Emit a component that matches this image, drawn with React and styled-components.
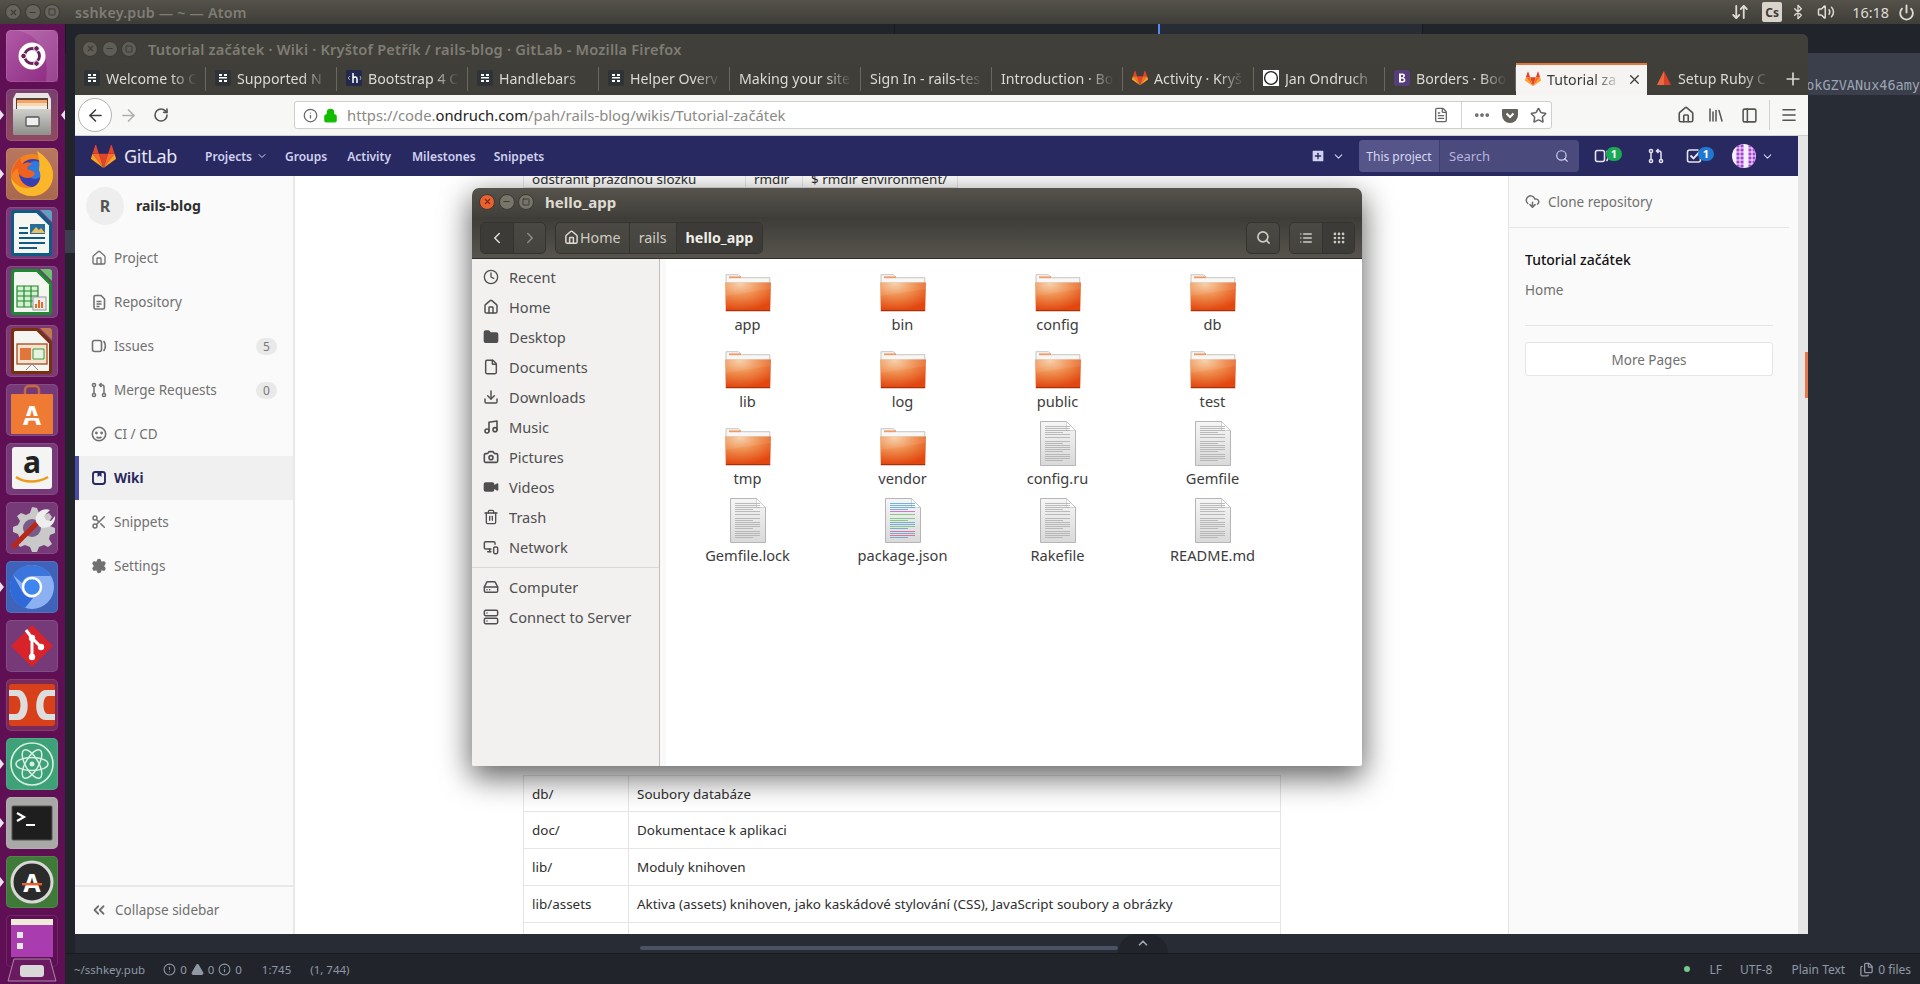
import React from "react";
import styled, { createGlobalStyle } from "styled-components";
import {
  ArrowLeft, ArrowRight, RotateCw, Info, Lock, Star, X, Plus, Menu, Search, ChevronDown, ChevronLeft,
  ChevronRight, ChevronUp, ChevronsLeft, Scissors, Settings, Clock, House, FileText,
  Folder, File, Download, Music, Camera, Video, Trash2, MonitorSmartphone, HardDrive, Server, List, Grip,
  Bluetooth, Volume2, Power, ArrowDownUp, CloudDownload, Ellipsis, CircleAlert, TriangleAlert, Minus,
  Square, PanelLeft, Library, SquarePlus, Files,
} from "lucide-react";

const UI = `"Noto Sans", "Open Sans", sans-serif`;

const GlobalStyle = createGlobalStyle`
  html, body { margin: 0; padding: 0; height: 100%; overflow: hidden; background: #282c34; }
  #root { height: 100%; }
  * { box-sizing: border-box; }
`;

const Desktop = styled.div`
  position: relative;
  width: 1920px;
  height: 984px;
  overflow: hidden;
  display: flex;
  flex-direction: column;
  font-family: ${UI};
`;

/* ---------- top panel ---------- */
const TopPanel = styled.div`
  height: 24px;
  flex: none;
  display: flex;
  align-items: center;
  padding: 0 0 0 5px;
  background: linear-gradient(#545249, #3e3d38);
  color: #7f7d74;
  font-size: 14.3px;
  font-weight: 600;
`;
const DimButtons = styled.div`
  display: flex;
  gap: 3.5px;
  margin-right: ${(p) => p.$mr}px;
`;
const DimButton = styled.span`
  width: 16px;
  height: 16px;
  border-radius: 50%;
  background: ${(p) => p.$bg || "#66645c"};
  border: 1px solid #3a3934;
  display: flex;
  align-items: center;
  justify-content: center;
  color: ${(p) => p.$fg || "#3c3b36"};
`;
const PanelTitle = styled.span`
  letter-spacing: 0.2px;
`;
const Tray = styled.div`
  margin-left: auto;
  display: flex;
  align-items: center;
  color: #dfdbd2;
  font-size: 14.4px;
  font-weight: 400;
  padding-right: 5px;
`;
const TrayItem = styled.span`
  display: inline-flex;
  margin-left: ${(p) => p.$ml}px;
`;
const CsBox = styled.span`
  width: 20px;
  height: 20px;
  margin-left: 13px;
  background: #d8d4cb;
  color: #3c3b37;
  border-radius: 2px;
  font-size: 12px;
  font-weight: 700;
  display: flex;
  align-items: center;
  justify-content: center;
`;

/* ---------- launcher ---------- */
const Body = styled.div`
  flex: 1;
  display: flex;
  min-height: 0;
`;
const Launcher = styled.div`
  width: 65px;
  flex: none;
  background: #5f1054;
  padding: 6px 0 0 6px;
  display: flex;
  flex-direction: column;
  gap: 7px;
  position: relative;
`;
const Tile = styled.div`
  position: relative;
  width: 52px;
  height: 52px;
  border-radius: 5px;
  background: ${(p) => p.$bg};
  box-shadow: inset 0 0 0 1px rgba(255, 255, 255, 0.1);
  flex: none;
  svg { display: block; }
`;
const Pip = styled.span`
  position: absolute;
  top: 21px;
  ${(p) => (p.$right ? "right: -7px;" : "left: -6px;")}
  width: 0;
  height: 0;
  border-top: 5px solid transparent;
  border-bottom: 5px solid transparent;
  ${(p) => (p.$right ? "border-right: 4px solid #e8e4ea;" : "border-left: 4px solid #e8e4ea;")}
`;

/* ---------- atom behind ---------- */
const AtomPane = styled.div`
  flex: 1;
  min-width: 0;
  display: flex;
  flex-direction: column;
  background: #282c34;
`;
const AtomTabs = styled.div`
  height: 29px;
  flex: none;
  display: flex;
  background: #21252b;
`;
const AtomTab = styled.div`
  width: ${(p) => p.$w}px;
  background: ${(p) => (p.$active ? "#282c34" : "#21252b")};
  border-left: ${(p) => (p.$active ? "2px solid #568af2" : "1px solid #181a1f")};
`;
const EditorRow = styled.div`
  flex: 1;
  display: flex;
  min-height: 0;
`;
const TreeStrip = styled.div`
  width: 10px;
  flex: none;
  background: #21252b;
  padding-top: 177px;
`;
const TreeSelected = styled.div`
  height: 23px;
  background: #3a3f4b;
`;
const Editor = styled.div`
  flex: 1;
  min-width: 0;
  display: flex;
  flex-direction: column;
`;
const SelectedLine = styled.div`
  height: 42px;
  background: #3a3f4b;
  color: #9da5b4;
  font: 13.5px "DejaVu Sans Mono", monospace;
  display: flex;
  justify-content: flex-end;
  align-items: flex-end;
  padding-bottom: 2px;
  white-space: nowrap;
  overflow: hidden;
`;
const EditorFoot = styled.div`
  margin-top: auto;
  height: 19px;
  display: flex;
  align-items: flex-end;
  padding-left: 565px;
`;
const HScroll = styled.div`
  width: 478px;
  height: 4px;
  border-radius: 2px;
  background: #4b5362;
  margin-bottom: 3px;
`;
const Handle = styled.div`
  width: 50px;
  height: 19px;
  border-radius: 25px 25px 0 0;
  background: #21252b;
  color: #9da5b4;
  display: flex;
  justify-content: center;
  padding-top: 2px;
`;
const StatusBar = styled.div`
  height: 31px;
  flex: none;
  background: #21252b;
  border-top: 1px solid #181a1f;
  color: #9098a6;
  font-size: 12px;
  display: flex;
  align-items: center;
  padding: 0 9px;
`;
const StatusGroup = styled.span`
  display: inline-flex;
  align-items: center;
  font-size: ${(p) => p.$fs || 12}px;
  gap: ${(p) => p.$gap ?? 4}px;
  margin-left: ${(p) => p.$ml ?? 0}px;
`;
const StatusPush = styled.span`
  flex: 1;
`;
const GreenDot = styled.span`
  width: 6px;
  height: 6px;
  border-radius: 50%;
  background: #73c990;
`;

/* ---------- firefox ---------- */
const FirefoxWindow = styled.div`
  position: absolute;
  left: 75px;
  top: 34px;
  width: 1733px;
  height: 900px;
  display: flex;
  flex-direction: column;
  border-radius: 6px 6px 0 0;
  overflow: hidden;
  background: #3f3e39;
`;
const FfTitle = styled.div`
  height: 29px;
  flex: none;
  display: flex;
  align-items: center;
  padding: 0 0 0 7px;
  color: #7f7d74;
  font-size: 14.6px;
  font-weight: 600;
  background: #403f3a;
`;
const TabStrip = styled.div`
  height: 32px;
  flex: none;
  display: flex;
  background: #3f3e39;
`;
const Tab = styled.div`
  width: 131px;
  flex: none;
  display: flex;
  align-items: center;
  gap: 6px;
  padding: 0 ${(p) => (p.$active ? 5 : 9)}px 2px 9px;
  font-size: 14.2px;
  color: ${(p) => (p.$active ? "#3a3a38" : "#dcdad4")};
  background: ${(p) => (p.$active ? "#f5f4f2" : "transparent")};
  border-top: ${(p) => (p.$active ? "2px solid #e8743b" : "none")};
  position: relative;
  &::after {
    content: "";
    display: ${(p) => (p.$active || p.$noSep ? "none" : "block")};
    position: absolute;
    right: 0;
    top: 4px;
    bottom: 4px;
    width: 1px;
    background: #6a6860;
  }
`;
const TabText = styled.span`
  flex: 1;
  min-width: 0;
  white-space: nowrap;
  overflow: hidden;
  -webkit-mask-image: linear-gradient(to right, #000 calc(100% - 26px), transparent);
  mask-image: linear-gradient(to right, #000 calc(100% - 26px), transparent);
`;
const NewTab = styled.div`
  width: 33px;
  display: flex;
  align-items: center;
  justify-content: center;
  color: #d8d6d0;
`;
const NavBar = styled.div`
  height: 41px;
  flex: none;
  display: flex;
  align-items: center;
  background: #f7f7f6;
  border-bottom: 1px solid #d0cfcc;
  color: #55544f;
  padding-left: 3px;
`;
const BackButton = styled.div`
  width: 34px;
  height: 34px;
  border-radius: 50%;
  background: #fff;
  border: 1px solid #b4b3af;
  display: flex;
  align-items: center;
  justify-content: center;
  color: #3f3f3c;
  flex: none;
`;
const NavIcon = styled.span`
  display: inline-flex;
  width: ${(p) => p.$w || 32}px;
  justify-content: ${(p) => (p.$end ? "flex-end" : "center")};
  align-items: center;
  color: ${(p) => p.$color || "inherit"};
  flex: none;
`;
const UrlBar = styled.div`
  width: 1258px;
  height: 28px;
  margin-left: 0;
  flex: none;
  background: #fff;
  border: 1px solid #cfcecb;
  border-radius: 3px;
  display: flex;
  align-items: center;
  padding-left: 8px;
  font-size: 14.8px;
  color: #8b8a86;
`;
const UrlHost = styled.span`
  color: #222;
`;
const UrlText = styled.span`
  margin-left: 5px;
  flex: 1;
`;
const VSep = styled.span`
  width: 1px;
  height: ${(p) => p.$h || 22}px;
  background: #d2d1ce;
  flex: none;
  margin: 0 ${(p) => p.$mr ?? 0}px 0 ${(p) => p.$ml ?? 0}px;
`;
const Page = styled.div`
  flex: 1;
  display: flex;
  min-height: 0;
  background: #fff;
`;
const PageMain = styled.div`
  flex: 1;
  min-width: 0;
  display: flex;
  flex-direction: column;
`;
const PageScroll = styled.div`
  width: 10px;
  flex: none;
  background: #e6e6e6;
  padding: 216px 0 0 7px;
`;
const PageThumb = styled.div`
  height: 46px;
  width: 3px;
  background: #e8774c;
`;
const GlHeader = styled.div`
  height: 40px;
  flex: none;
  background: #292961;
  display: flex;
  align-items: center;
  padding-left: 16px;
  color: #d1d1f0;
  position: relative;
  z-index: 1;
`;
const GlBrand = styled.span`
  font-size: 18px;
  color: #e6e6f5;
  margin-left: 8px;
  margin-right: 28px;
  letter-spacing: -0.3px;
`;
const GlLink = styled.span`
  font-size: 12px;
  font-weight: 600;
  margin-right: ${(p) => p.$mr ?? 20}px;
  display: inline-flex;
  align-items: center;
  gap: 4px;
`;
const GlRight = styled.div`
  margin-left: auto;
  display: flex;
  align-items: center;
  padding-right: 24px;
`;
const SearchBox = styled.div`
  width: 220px;
  height: 32px;
  margin: 0 15px 0 14px;
  border-radius: 4px;
  background: #4b4a7c;
  display: flex;
  align-items: center;
  font-size: 13px;
  overflow: hidden;
`;
const SearchScope = styled.span`
  width: 81px;
  height: 100%;
  background: #56558a;
  color: #d8d8f0;
  font-size: 12px;
  display: flex;
  align-items: center;
  justify-content: center;
  border-right: 1px solid #3f3e72;
`;
const SearchHint = styled.span`
  margin-left: 9px;
  flex: 1;
  color: #b5b5dc;
`;
const HeaderIcon = styled.span`
  position: relative;
  display: inline-flex;
  width: ${(p) => p.$w || 38}px;
  align-items: center;
  color: #e4e4f4;
`;
const HeaderBadge = styled.span`
  position: absolute;
  left: 12px;
  top: -1px;
  width: 16px;
  height: 14px;
  border-radius: 7px;
  background: ${(p) => p.$bg};
  color: #fff;
  font-size: 11px;
  font-weight: 700;
  line-height: 14px;
  text-align: center;
`;
const Avatar = styled.span`
  width: 24px;
  height: 24px;
  border-radius: 50%;
  flex: none;
  overflow: hidden;
  margin-right: 5px;
`;
const GlBody = styled.div`
  flex: 1;
  min-height: 0;
  display: flex;
`;
const Sidebar = styled.div`
  width: 220px;
  flex: none;
  background: #fafafa;
  border-right: 2px solid #e8e8e8;
  display: flex;
  flex-direction: column;
`;
const ProjectHead = styled.div`
  height: 60px;
  display: flex;
  align-items: center;
  padding: 0 0 1px 11px;
  font-size: 14px;
  font-weight: 700;
  color: #2e2e2e;
`;
const ProjectAvatar = styled.span`
  width: 38px;
  height: 38px;
  border-radius: 50%;
  background: #eee;
  color: #555;
  font-size: 16px;
  font-weight: 700;
  display: flex;
  align-items: center;
  justify-content: center;
  margin-right: 12px;
`;
const SideItem = styled.div`
  height: 44px;
  display: flex;
  align-items: center;
  padding: 0 16px 0 ${(p) => (p.$active ? 12 : 16)}px;
  gap: 7px;
  font-size: 13.5px;
  font-weight: ${(p) => (p.$active ? 700 : 400)};
  color: ${(p) => (p.$active ? "#292961" : "#707070")};
  background: ${(p) => (p.$active ? "#f0f0f0" : "transparent")};
  border-left: ${(p) => (p.$active ? "4px solid #4b4ba3" : "none")};
`;
const Count = styled.span`
  margin-left: auto;
  width: 21px;
  height: 17px;
  border-radius: 9px;
  background: #e9e9e9;
  color: #777;
  font-size: 12px;
  line-height: 17px;
  text-align: center;
`;
const Collapse = styled.div`
  margin-top: auto;
  height: 49px;
  border-top: 2px solid #e8e8e8;
  display: flex;
  align-items: center;
  padding: 0 0 1px 15px;
  gap: 7px;
  font-size: 13.5px;
  color: #707070;
`;
const WikiMain = styled.div`
  flex: 1;
  min-width: 0;
  overflow: hidden;
  padding-left: 228px;
`;
const WikiTable = styled.div`
  display: grid;
  grid-template-columns: ${(p) => p.$cols};
  width: ${(p) => p.$w}px;
  margin-top: ${(p) => p.$mt}px;
  border-left: 1px solid #e5e5e5;
  font-size: 13.45px;
  color: #2e2e2e;
`;
const Cell = styled.div`
  height: 37px;
  padding: 0 8px;
  line-height: ${(p) => p.$lh || 37}px;
  border-right: 1px solid #e5e5e5;
  border-bottom: 1px solid #e5e5e5;
  white-space: nowrap;
  overflow: hidden;
  border-top: ${(p) => (p.$first ? "1px solid #e5e5e5" : "none")};
`;
const RightBar = styled.div`
  width: 290px;
  flex: none;
  background: #fafafa;
  border-left: 1px solid #e5e5e5;
  color: #707070;
  font-size: 13.5px;
`;
const CloneRow = styled.div`
  height: 52px;
  margin-right: 9px;
  padding: 0 0 0 16px;
  display: flex;
  align-items: center;
  gap: 8px;
  border-bottom: 1px solid #e5e5e5;
`;
const RightInner = styled.div`
  padding: 0 25px 0 16px;
`;
const WikiTitle = styled.div`
  color: #111;
  font-weight: 500;
  font-size: 14px;
  margin-top: 22px;
  line-height: 20px;
`;
const WikiHome = styled.div`
  margin-top: 10px;
  line-height: 20px;
  padding-bottom: 25px;
  border-bottom: 1px solid #e5e5e5;
`;
const MorePages = styled.div`
  margin-top: 16px;
  height: 34px;
  padding-top: 1px;
  border: 1px solid #e5e5e5;
  border-radius: 3px;
  background: #fff;
  display: flex;
  align-items: center;
  justify-content: center;
`;

/* ---------- nautilus ---------- */
const FilesWindow = styled.div`
  position: absolute;
  left: 472px;
  top: 188px;
  width: 890px;
  height: 578px;
  display: flex;
  flex-direction: column;
  border-radius: 7px 7px 2px 2px;
  overflow: hidden;
`;
const FilesShadow = styled.div`
  position: absolute;
  left: 472px;
  top: 188px;
  width: 890px;
  height: 578px;
  border-radius: 7px;
  box-shadow: 0 10px 30px 2px rgba(0, 0, 0, 0.6);
`;
const FilesTitle = styled.div`
  height: 29px;
  flex: none;
  display: flex;
  align-items: center;
  padding: 0 0 2px 7px;
  background: linear-gradient(#55534b, #403f3a);
  color: #dfdbd2;
  font-size: 15px;
  font-weight: 700;
`;
const FilesTools = styled.div`
  height: 42px;
  flex: none;
  display: flex;
  align-items: center;
  padding: 0 7px 0 8px;
  background: linear-gradient(#3d3c37, #56544c);
  border-bottom: 1px solid #2f2e2a;
`;
const ToolGroup = styled.div`
  display: flex;
  height: 32px;
  border: 1px solid #34332f;
  border-radius: 5px;
  margin-right: ${(p) => p.$mr ?? 0}px;
  overflow: hidden;
  color: #dfdbd2;
  font-size: 14.3px;
  background: linear-gradient(#4a4943, #44433e);
`;
const ToolSpacer = styled.span`
  flex: 1;
`;
const ToolButton = styled.div`
  min-width: ${(p) => p.$w || 32}px;
  display: flex;
  align-items: center;
  justify-content: center;
  gap: 1px;
  padding: 0 ${(p) => p.$pad ?? 0}px;
  border-left: ${(p) => (p.$first ? "none" : "1px solid #34332f")};
  background: ${(p) => (p.$on ? "#3c3b37" : "transparent")};
  font-weight: ${(p) => (p.$bold ? 700 : 400)};
  color: ${(p) => (p.$bold ? "#f0eee8" : "#d0ccc3")};
`;
const FilesBody = styled.div`
  flex: 1;
  min-height: 0;
  display: flex;
  background: #fff;
`;
const Places = styled.div`
  width: 188px;
  flex: none;
  background: #f2f1f0;
  border-right: 1px solid #c0beba;
  padding-top: 3px;
  color: #4c4c4c;
  font-size: 14.6px;
`;
const Place = styled.div`
  height: 30px;
  display: flex;
  align-items: center;
  padding-left: 11px;
  gap: 10px;
  color: #4f4f4f;
`;
const PlaceSep = styled.div`
  height: 1px;
  background: #d9d8d6;
  margin: 5px 0 4px;
`;
const IconGrid = styled.div`
  flex: 1;
  display: grid;
  grid-template-columns: repeat(4, 155px);
  grid-auto-rows: 77px;
  padding: 5px 0 0 4px;
  border-left: 6px solid #f9f9f9;
  align-content: start;
`;
const FileItem = styled.div`
  display: flex;
  flex-direction: column;
  align-items: center;
  color: #3c3c3c;
  font-size: 14.6px;
`;
const FileIconBox = styled.div`
  height: 48px;
  display: flex;
  align-items: flex-end;
`;
const FileLabel = styled.span`
  line-height: 20px;
  margin-top: 2px;
`;

/* ---------- drawings ---------- */
const GitLabLogo = ({ size = 24 }) => (
  <svg width={size} height={size} viewBox="0 0 36 36">
    <path fill="#e24329" d="M18 34.5L24.6 14.2H11.4z" />
    <path fill="#fc6d26" d="M18 34.5L11.4 14.2H2.1z" />
    <path fill="#fca326" d="M2.1 14.2L.1 20.4c-.2.6 0 1.2.5 1.5L18 34.5z" />
    <path fill="#e24329" d="M2.1 14.2h9.3L7.4 1.9c-.2-.6-1.1-.6-1.3 0z" />
    <path fill="#fc6d26" d="M18 34.5l6.6-20.3h9.3z" />
    <path fill="#fca326" d="M33.9 14.2l2 6.2c.2.6 0 1.2-.5 1.5L18 34.5z" />
    <path fill="#e24329" d="M33.9 14.2h-9.3l4-12.3c.2-.6 1.1-.6 1.3 0z" />
  </svg>
);

const BookFavicon = () => (
  <svg width="16" height="16" viewBox="0 0 16 16">
    <rect width="16" height="16" rx="2" fill="#2e3338" />
    <path d="M4 4h3v2H4zM9 4h3v2H9zM4 7h8v1.6H4zM4 10h3v2H4zM9 10h3v2H9z" fill="#fff" />
  </svg>
);
const HFavicon = () => (
  <svg width="16" height="16" viewBox="0 0 16 16">
    <rect width="16" height="16" rx="2" fill="#23284f" />
    <path d="M7 3v10M7 8c2-2 4-1 4 1v4" stroke="#fff" strokeWidth="1.5" fill="none" />
    <path d="M4 6L2 8l2 2M14 6l1 2-1 2" stroke="#9aa" strokeWidth="1" fill="none" />
  </svg>
);
const GithubFavicon = () => (
  <svg width="16" height="16" viewBox="0 0 16 16">
    <rect width="16" height="16" fill="#fff" />
    <circle cx="8" cy="8" r="6.4" fill="#fff" stroke="#222" strokeWidth="1.4" />
  </svg>
);
const BFavicon = () => (
  <svg width="16" height="16" viewBox="0 0 16 16">
    <rect width="16" height="16" rx="3" fill="#563d7c" />
    <path d="M5 3.5h3.6c3 0 3 3.6.9 4.2 2.6.4 2.6 4.8-.7 4.8H5zM7 5v2.2h1.4c1.3 0 1.3-2.2 0-2.2zM7 8.7V11h1.7c1.4 0 1.4-2.3 0-2.3z" fill="#fff" fillRule="evenodd" />
  </svg>
);
const RubyFavicon = () => (
  <svg width="16" height="16" viewBox="0 0 16 16">
    <path d="M8 1l7 14H1z" fill="#d9402a" />
    <path d="M8 1v14H1z" fill="#e9683f" />
  </svg>
);
const Pocket = () => (
  <svg width="18" height="18" viewBox="0 0 18 18">
    <path d="M2 3h14a1 1 0 0 1 1 1v5a8 8 0 0 1-16 0V4a1 1 0 0 1 1-1z" fill="#62615c" />
    <path d="M5.5 7.5L9 11l3.5-3.5" stroke="#fff" strokeWidth="2" fill="none" />
  </svg>
);

/* gitlab's own nav glyphs */
const IssueIcon = ({ size = 16 }) => (
  <svg width={size} height={size} viewBox="0 0 16 16" fill="none" stroke="currentColor" strokeWidth="1.6">
    <rect x="1.5" y="2.5" width="9" height="11" rx="2" />
    <path d="M13 3.5c1.6 2.6 1.6 6.4 0 9" strokeLinecap="round" />
  </svg>
);
const MergeIcon = ({ size = 16 }) => (
  <svg width={size} height={size} viewBox="0 0 16 16" fill="none" stroke="currentColor" strokeWidth="1.5">
    <circle cx="3" cy="3" r="1.6" />
    <circle cx="3" cy="13" r="1.6" />
    <circle cx="13" cy="13" r="1.6" />
    <path d="M3 4.6v6.8M13 11.4V5a2 2 0 0 0-2-2H8.5M10.5 1L8.5 3l2 2" />
  </svg>
);
const TodoIcon = ({ size = 16 }) => (
  <svg width={size} height={size} viewBox="0 0 16 16" fill="none" stroke="currentColor" strokeWidth="1.6">
    <path d="M14.5 8v4a2 2 0 0 1-2 2h-9a2 2 0 0 1-2-2V4a2 2 0 0 1 2-2h9" />
    <path d="M4.5 7.5l3 3 7-7.5" strokeWidth="1.9" />
  </svg>
);
const CiIcon = ({ size = 16 }) => (
  <svg width={size} height={size} viewBox="0 0 16 16" fill="none" stroke="currentColor" strokeWidth="1.6">
    <circle cx="8" cy="8" r="6.7" />
    <circle cx="5.4" cy="7" r="1.4" fill="currentColor" stroke="none" />
    <circle cx="10.6" cy="7" r="1.4" fill="currentColor" stroke="none" />
    <path d="M5.5 11c1.5 1 3.5 1 5 0" />
  </svg>
);
const WikiIcon = ({ size = 16 }) => (
  <svg width={size} height={size} viewBox="0 0 16 16" fill="none" stroke="currentColor" strokeWidth="1.9">
    <rect x="2" y="2" width="12" height="12" rx="2.4" />
    <path d="M6.5 2h4v5l-2-1.4-2 1.4z" fill="currentColor" stroke="none" />
  </svg>
);
const RepoIcon = ({ size = 16 }) => (
  <svg width={size} height={size} viewBox="0 0 16 16" fill="none" stroke="currentColor" strokeWidth="1.6">
    <path d="M3 3a1.5 1.5 0 0 1 1.5-1.5H10L13.5 5v8.5A1.5 1.5 0 0 1 12 15H4.5A1.5 1.5 0 0 1 3 13.5z" />
    <path d="M5.5 7.5h5M5.5 10h5M5.5 12.5h3" />
  </svg>
);

const IdentIcon = () => (
  <svg width="24" height="24" viewBox="0 0 24 24">
    <rect width="24" height="24" fill="#f4f0fa" />
    {[...Array(36)].map((_, i) => {
      const x = (i % 6) * 4;
      const y = Math.floor(i / 6) * 4;
      return (i * 7) % 3 !== 0 ? <rect key={i} x={x + 0.5} y={y + 0.5} width="3" height="3" fill="#a63fd8" /> : null;
    })}
  </svg>
);

const FolderIcon = () => (
  <svg width="46" height="38" viewBox="0 0 46 38">
    <defs>
      <radialGradient id="fg" cx="0.32" cy="0.05" r="0.95">
        <stop offset="0" stopColor="#f6cda4" />
        <stop offset="0.45" stopColor="#ef8f50" />
        <stop offset="1" stopColor="#e2470f" />
      </radialGradient>
    </defs>
    <path d="M1 .7h12.5l3 3h28.3V9H1z" fill="#f8f7f5" stroke="#b9b7b2" strokeWidth="0.8" />
    <rect x="4" y="2.4" width="12" height="1.8" fill="#ef9a68" />
    <path d="M0 8.5h46l-.8 28H.8z" fill="url(#fg)" />
    <path d="M46 15L0 22v-13.5h46z" fill="#fff" opacity="0.08" />
    <path d="M.8 36h44.4v1.3H.8z" fill="#a6320c" />
  </svg>
);

const LINE_ROWS = [4, 6, 8, 10, 12, 15, 19, 21, 23, 25, 27, 29, 32, 34, 36, 38];
const LINE_COLORS = ["#5aa0d8", "#5aa0d8", "#5aa0d8", "#5aa0d8", "#c060c0", "#70c070", "#70c070", "#70c070", "#5aa0d8", "#5aa0d8", "#70c070", "#5aa0d8", "#d85a8a", "#5aa0d8", "#d85a8a", "#5aa0d8"];
const DocIcon = ({ code }) => (
  <svg width="36" height="45" viewBox="0 0 36 45">
    <defs>
      <linearGradient id="dg" x1="0" y1="0" x2="0" y2="1">
        <stop offset="0" stopColor="#f6f6f6" />
        <stop offset="1" stopColor="#d9d9d9" />
      </linearGradient>
    </defs>
    <path d="M.5.5h26l9 9v35H.5z" fill="url(#dg)" stroke="#b5b5b5" />
    <path d="M26.5.5v9h9z" fill="#fff" stroke="#bbb" strokeWidth="0.6" />
    {LINE_ROWS.map((y, i) => (
      <rect key={y} x="5" y={y + 1} width={i % 4 === 3 ? 18 : 25} height="0.8" fill={code ? LINE_COLORS[i] : "#adadad"} />
    ))}
  </svg>
);

const OfficeDoc = ({ edge, corner, children }) => (
  <svg width="52" height="52" viewBox="0 0 52 52">
    <path d="M8 3h24l14 14v29a3 3 0 0 1-3 3H8a3 3 0 0 1-3-3V6a3 3 0 0 1 3-3z" fill={edge} />
    <path d="M9 6h21.5L43 18.5V46H8V7z" fill="#f5f5f2" />
    <path d="M34 3h9a3 3 0 0 1 3 3v9z" fill={corner} />
    {children}
  </svg>
);

const TileIcon = ({ kind }) => {
  switch (kind) {
    case "ubuntu":
      return (
        <svg width="52" height="52" viewBox="0 0 52 52">
          <path d="M10 0c22 4 34 22 30 52h12V8a8 8 0 0 0-8-8z" fill="#fff" opacity="0.12" />
          <circle cx="26" cy="26" r="13.5" fill="#fff" />
          <circle cx="26" cy="26" r="7.5" fill="none" stroke="#6b1f5c" strokeWidth="2.8" />
          <circle cx="17.5" cy="26" r="2.8" fill="#6b1f5c" stroke="#fff" />
          <circle cx="30.5" cy="18.5" r="2.8" fill="#6b1f5c" stroke="#fff" />
          <circle cx="30.5" cy="33.5" r="2.8" fill="#6b1f5c" stroke="#fff" />
        </svg>
      );
    case "files":
      return (
        <svg width="52" height="52" viewBox="0 0 52 52">
          <defs>
            <linearGradient id="drawer" x1="0" y1="0" x2="0" y2="1">
              <stop offset="0" stopColor="#cfcfcc" />
              <stop offset="1" stopColor="#8f8f8c" />
            </linearGradient>
          </defs>
          <path d="M10 4h32l3 6v14H7V10z" fill="#e6e6e4" />
          <rect x="10" y="9" width="32" height="13" fill="#5a4030" />
          <rect x="11" y="11" width="30" height="3" fill="#f2a468" />
          <rect x="11" y="14" width="30" height="3" fill="#f5d8b8" />
          <rect x="11" y="17" width="30" height="4" fill="#f3efe6" />
          <rect x="7" y="20" width="38" height="26" rx="1" fill="url(#drawer)" />
          <rect x="20" y="28" width="13" height="9" rx="1" fill="#efefef" stroke="#555" strokeWidth="1.3" />
        </svg>
      );
    case "firefox":
      return (
        <svg width="52" height="52" viewBox="0 0 52 52">
          <circle cx="26" cy="27" r="21" fill="#f6821f" />
          <circle cx="27" cy="25" r="14" fill="#3a3fb0" />
          <circle cx="29" cy="22" r="9" fill="#2f79e0" />
          <path d="M31 3c8 5 16 13 16 24 0 12-9 21-21 21C14 48 6 40 5 30c5 9 15 12 22 9 7-3 9-11 6-17 1-6 0-13-2-19z" fill="#fbb62a" />
          <path d="M6 27c0-7 4-14 9-17-1 3 0 5 2 6 3-2 7-2 9 0-3 1-5 3-5 5 3 1 7 2 8 5-3 5-11 5-15 1-2-2-3-5-2-7-2 1-5 4-6 7z" fill="#f0601e" />
        </svg>
      );
    case "writer":
      return (
        <OfficeDoc edge="#0e5c86" corner="#5da0c4">
          <path d="M13 20h9v2h-9zM13 25h9v2h-9zM13 30h26v2H13zM13 35h26v2H13zM13 40h18v2H13z" fill="#0e5c86" />
          <rect x="24" y="17" width="15" height="10" fill="#2a6d96" />
          <path d="M25 26l5-6 3 3 2-2 4 5z" fill="#e8c060" />
        </OfficeDoc>
      );
    case "calc":
      return (
        <OfficeDoc edge="#1c8a2e" corner="#6cc46c">
          <path d="M11 20h21v21H11zM11 25h21M11 30h21M11 35h21M18 20v21M25 20v21" fill="#d6efd2" stroke="#1c8a2e" strokeWidth="1.2" />
          <rect x="27" y="31" width="13" height="13" fill="#eee" stroke="#999" />
          <path d="M29 42v-4h2v4zM32 42v-8h2v8zM35 42v-6h2v6z" fill="#e0702a" />
        </OfficeDoc>
      );
    case "impress":
      return (
        <OfficeDoc edge="#7a2f10" corner="#c07a50">
          <rect x="11" y="19" width="30" height="20" fill="#f5e3cf" stroke="#a24a1c" strokeWidth="1.3" />
          <path d="M14 23h11v12H14z" fill="#e0763c" />
          <path d="M27 24h11v10H27z" fill="#e7f2e2" stroke="#3b9a3b" />
          <path d="M20 45l6-6 6 6" stroke="#888" fill="none" />
        </OfficeDoc>
      );
    case "software":
      return (
        <svg width="52" height="52" viewBox="0 0 52 52">
          <path d="M19 11V6a4 4 0 0 1 4-4h6a4 4 0 0 1 4 4v5" fill="none" stroke="#c96a3a" strokeWidth="2.4" />
          <rect x="5" y="10" width="42" height="40" rx="1" fill="#ee7a33" />
          <text x="26" y="41" textAnchor="middle" fontSize="26" fontWeight="700" fontFamily="Noto Sans" fill="#fff">A</text>
          <rect x="14" y="32" width="24" height="2" fill="#ee7a33" />
        </svg>
      );
    case "amazon":
      return (
        <svg width="52" height="52" viewBox="0 0 52 52">
          <rect x="6" y="4" width="40" height="42" rx="3" fill="#f4f4f2" />
          <text x="26" y="30" textAnchor="middle" fontSize="30" fontWeight="700" fontFamily="Noto Sans" fill="#222">a</text>
          <path d="M10 34c8 6 22 6 32 0" stroke="#f09a1c" strokeWidth="2.4" fill="none" />
        </svg>
      );
    case "tools":
      return (
        <svg width="52" height="52" viewBox="0 0 52 52">
          <path d="M26 5l5 1 2 5 5 2 5-2 3 4-3 5 1 4 5 2v5l-5 2-1 4 3 5-4 3-4-2-5 2-2 5h-5l-2-5-5-2-5 2-3-4 3-4-2-5-5-2v-5l5-2 2-4-3-5 4-3 5 2 4-2z" fill="#c9c9c9" />
          <circle cx="26" cy="26" r="9" fill="#7a5a86" />
          <path d="M8 44L34 18" stroke="#b8261c" strokeWidth="5" strokeLinecap="round" />
          <path d="M30 20c-2-8 6-15 14-12l-6 6 2 4 5 1 4-5c1 9-8 14-15 11z" fill="#eee" />
        </svg>
      );
    case "chromium":
      return (
        <svg width="52" height="52" viewBox="0 0 52 52">
          <circle cx="26" cy="26" r="22" fill="#8cb1f2" />
          <path d="M26 4a22 22 0 0 1 19 11H26a11 11 0 0 0-10 7L7 14A22 22 0 0 1 26 4z" fill="#3c76dc" />
          <path d="M4 26a22 22 0 0 1 3-12l9 16a11 11 0 0 0 11 7l-8 10A22 22 0 0 1 4 26z" fill="#2f6ad8" />
          <circle cx="26" cy="26" r="9" fill="#3f86ee" stroke="#fff" strokeWidth="2.5" />
        </svg>
      );
    case "git":
      return (
        <svg width="52" height="52" viewBox="0 0 52 52">
          <path d="M26 5l21 21-21 21L5 26z" fill="#d8232a" />
          <path d="M20 10l6 8v20M26 18l9 9" stroke="#fff" strokeWidth="3" fill="none" />
          <circle cx="26" cy="18" r="3.2" fill="#fff" />
          <circle cx="35" cy="27" r="3.2" fill="#fff" />
          <circle cx="26" cy="37" r="3.2" fill="#fff" />
        </svg>
      );
    case "dc":
      return (
        <svg width="52" height="52" viewBox="0 0 52 52">
          <rect x="3" y="5" width="46" height="42" rx="3" fill="#d8401a" />
          <path d="M3 11h9c12 0 14 30 0 30H3v-6h7c6 0 6-18 0-18H3z" fill="#ddd" />
          <path d="M49 11h-9c-12 0-14 30 0 30h9v-6h-7c-6 0-6-18 0-18h7z" fill="#ddd" />
        </svg>
      );
    case "atom":
      return (
        <svg width="52" height="52" viewBox="0 0 52 52">
          <circle cx="26" cy="26" r="21" fill="#3ea178" stroke="#d8efe3" strokeWidth="1.6" />
          <g fill="none" stroke="#d8efe3" strokeWidth="1.5">
            <ellipse cx="26" cy="26" rx="16" ry="6.5" />
            <ellipse cx="26" cy="26" rx="16" ry="6.5" transform="rotate(60 26 26)" />
            <ellipse cx="26" cy="26" rx="16" ry="6.5" transform="rotate(120 26 26)" />
          </g>
          <circle cx="26" cy="26" r="2.5" fill="#d8efe3" />
        </svg>
      );
    case "terminal":
      return (
        <svg width="52" height="52" viewBox="0 0 52 52">
          <rect x="6" y="9" width="40" height="34" rx="1" fill="#1e1e1e" stroke="#555" />
          <path d="M11 16l7 4-7 4" stroke="#fff" strokeWidth="2.2" fill="none" />
          <rect x="20" y="27" width="9" height="2" fill="#fff" />
        </svg>
      );
    case "update":
      return (
        <svg width="52" height="52" viewBox="0 0 52 52">
          <circle cx="26" cy="26" r="20" fill="#2b2b2b" stroke="#d8d8d8" strokeWidth="3" />
          <text x="26" y="36" textAnchor="middle" fontSize="25" fontWeight="700" fontFamily="Noto Sans" fill="#fff">A</text>
          <rect x="16" y="27" width="20" height="2.4" fill="#e8602c" />
        </svg>
      );
    default:
      return (
        <svg width="52" height="69" viewBox="0 0 52 69">
          <rect x="5" y="4" width="42" height="38" fill="#a93db0" />
          <rect x="5" y="4" width="42" height="6" fill="#f0ead8" />
          <rect x="11" y="17" width="6" height="6" fill="#e8e8e8" />
          <rect x="11" y="28" width="6" height="6" fill="#e8e8e8" />
          <path d="M8 44h36l6 22H2z" fill="#6a1a60" stroke="#a88aa4" />
          <rect x="14" y="50" width="24" height="12" rx="3" fill="#d8d8d8" />
        </svg>
      );
  }
};

const LAUNCHER = [
  { kind: "ubuntu", bg: "linear-gradient(135deg,#b15aa6,#8b2a80)" },
  { kind: "files", bg: "linear-gradient(#7a3f6e,#8f4a5e)", left: true, right: true },
  { kind: "firefox", bg: "linear-gradient(#b87860,#a8684e)", left: true },
  { kind: "writer", bg: "#773a78" },
  { kind: "calc", bg: "#773a78" },
  { kind: "impress", bg: "#7d3a72" },
  { kind: "software", bg: "#773a78" },
  { kind: "amazon", bg: "#773a78" },
  { kind: "tools", bg: "#773a78" },
  { kind: "chromium", bg: "#3f63b8", left: true },
  { kind: "git", bg: "#773a78" },
  { kind: "dc", bg: "#7a2a5a" },
  { kind: "atom", bg: "#3ea178", left: true },
  { kind: "terminal", bg: "#a8a8a6", left: true },
  { kind: "update", bg: "#3f7a38", left: true },
  { kind: "workspace", bg: "#5f1054" },
];

const TABS = [
  { text: "Welcome to C", icon: <BookFavicon /> },
  { text: "Supported N", icon: <BookFavicon /> },
  { text: "Bootstrap 4 C", icon: <HFavicon /> },
  { text: "Handlebars", icon: <BookFavicon /> },
  { text: "Helper Overv", icon: <BookFavicon /> },
  { text: "Making your site" },
  { text: "Sign In - rails-tes" },
  { text: "Introduction · Bo" },
  { text: "Activity · Kryš", icon: <GitLabLogo size={16} /> },
  { text: "Jan Ondruch", icon: <GithubFavicon /> },
  { text: "Borders · Boo", icon: <BFavicon /> },
  { text: "Tutorial za", icon: <GitLabLogo size={16} />, active: true },
  { text: "Setup Ruby C", icon: <RubyFavicon />, noSep: true },
];

const SIDE_ITEMS = [
  { label: "Project", icon: <House size={16} /> },
  { label: "Repository", icon: <RepoIcon /> },
  { label: "Issues", icon: <IssueIcon />, count: 5 },
  { label: "Merge Requests", icon: <MergeIcon />, count: 0 },
  { label: "CI / CD", icon: <CiIcon /> },
  { label: "Wiki", icon: <WikiIcon />, active: true },
  { label: "Snippets", icon: <Scissors size={16} strokeWidth={2.2} /> },
  { label: "Settings", icon: <Settings size={16} fill="#707070" color="#707070" /> },
];

const PLACES = [
  { label: "Recent", icon: <Clock size={16} strokeWidth={2} /> },
  { label: "Home", icon: <House size={16} strokeWidth={2.2} /> },
  { label: "Desktop", icon: <Folder size={16} fill="#4f4f4f" /> },
  { label: "Documents", icon: <File size={16} strokeWidth={2.2} /> },
  { label: "Downloads", icon: <Download size={16} strokeWidth={2.2} /> },
  { label: "Music", icon: <Music size={16} strokeWidth={2.4} /> },
  { label: "Pictures", icon: <Camera size={16} strokeWidth={2.4} /> },
  { label: "Videos", icon: <Video size={16} fill="#4f4f4f" /> },
  { label: "Trash", icon: <Trash2 size={16} strokeWidth={2} /> },
  { label: "Network", icon: <MonitorSmartphone size={16} strokeWidth={2.2} /> },
];
const PLACES_2 = [
  { label: "Computer", icon: <HardDrive size={16} strokeWidth={2.2} /> },
  { label: "Connect to Server", icon: <Server size={16} strokeWidth={2.2} /> },
];

const FILES = [
  { name: "app", dir: true }, { name: "bin", dir: true }, { name: "config", dir: true }, { name: "db", dir: true },
  { name: "lib", dir: true }, { name: "log", dir: true }, { name: "public", dir: true }, { name: "test", dir: true },
  { name: "tmp", dir: true }, { name: "vendor", dir: true }, { name: "config.ru" }, { name: "Gemfile" },
  { name: "Gemfile.lock" }, { name: "package.json", code: true }, { name: "Rakefile" }, { name: "README.md" },
];

const LOWER_ROWS = [
  ["db/", "Soubory databáze"],
  ["doc/", "Dokumentace k aplikaci"],
  ["lib/", "Moduly knihoven"],
  ["lib/assets", "Aktiva (assets) knihoven, jako kaskádové stylování (CSS), JavaScript soubory a obrázky"],
  ["", ""],
];

export default function App() {
  return (
    <Desktop>
      <GlobalStyle />
      <TopPanel>
        <DimButtons $mr={15}>
          <DimButton><X size={9} strokeWidth={3} /></DimButton>
          <DimButton><Minus size={9} strokeWidth={3} /></DimButton>
          <DimButton><Square size={8} strokeWidth={3} /></DimButton>
        </DimButtons>
        <PanelTitle>sshkey.pub — ~ — Atom</PanelTitle>
        <Tray>
          <ArrowDownUp size={18} strokeWidth={2.4} />
          <CsBox>Cs</CsBox>
          <TrayItem $ml={8}><Bluetooth size={16} /></TrayItem>
          <TrayItem $ml={11}><Volume2 size={18} /></TrayItem>
          <TrayItem $ml={17}>16:18</TrayItem>
          <TrayItem $ml={9}><Power size={17} strokeWidth={2.6} /></TrayItem>
        </Tray>
      </TopPanel>

      <Body>
        <Launcher>
          {LAUNCHER.map((t) => (
            <Tile key={t.kind} $bg={t.bg}>
              {t.left && <Pip />}
              {t.right && <Pip $right />}
              <TileIcon kind={t.kind} />
            </Tile>
          ))}
        </Launcher>

        <AtomPane>
          <AtomTabs>
            <AtomTab $w={829} />
            <AtomTab $w={264} />
            <AtomTab $w={264} $active />
            <AtomTab $w={264} />
          </AtomTabs>
          <EditorRow>
            <TreeStrip><TreeSelected /></TreeStrip>
            <Editor>
              <SelectedLine>okGZVANux46amy</SelectedLine>
              <EditorFoot>
                <HScroll />
                <Handle><ChevronUp size={14} strokeWidth={3} /></Handle>
              </EditorFoot>
            </Editor>
          </EditorRow>
          <StatusBar>
            <StatusGroup $fs={11.5}>~/sshkey.pub</StatusGroup>
            <StatusGroup $fs={11.5} $ml={18}><CircleAlert size={13} /> 0</StatusGroup>
            <StatusGroup $fs={11.5} $ml={4}><TriangleAlert size={13} fill="#9098a6" color="#9098a6" /> 0</StatusGroup>
            <StatusGroup $fs={11.5} $ml={4}><Info size={13} /> 0</StatusGroup>
            <StatusGroup $fs={11.5} $ml={20}>1:745</StatusGroup>
            <StatusGroup $fs={11.5} $ml={19}>(1, 744)</StatusGroup>
            <StatusPush />
            <GreenDot />
            <StatusGroup $ml={19}>LF</StatusGroup>
            <StatusGroup $ml={18}>UTF-8</StatusGroup>
            <StatusGroup $ml={19}>Plain Text</StatusGroup>
            <StatusGroup $ml={14}><Files size={15} /> 0 files</StatusGroup>
          </StatusBar>
        </AtomPane>
      </Body>

      <FirefoxWindow>
        <FfTitle>
          <DimButtons $mr={11}>
            <DimButton $bg="#5f5d56"><X size={9} strokeWidth={3} /></DimButton>
            <DimButton $bg="#5f5d56"><Minus size={9} strokeWidth={3} /></DimButton>
            <DimButton $bg="#5f5d56"><Square size={8} strokeWidth={3} /></DimButton>
          </DimButtons>
          <PanelTitle>Tutorial začátek · Wiki · Kryštof Petřík / rails-blog · GitLab - Mozilla Firefox</PanelTitle>
        </FfTitle>
        <TabStrip>
          {TABS.map((t) => (
            <Tab key={t.text} $active={t.active} $noSep={t.noSep}>
              {t.icon}
              <TabText>{t.text}</TabText>
              {t.active && <X size={15} strokeWidth={2} />}
            </Tab>
          ))}
          <NewTab><Plus size={20} /></NewTab>
        </TabStrip>
        <NavBar>
          <BackButton><ArrowLeft size={19} /></BackButton>
          <NavIcon $w={33} $color="#b0afab"><ArrowRight size={19} /></NavIcon>
          <NavIcon $w={31}><RotateCw size={16} strokeWidth={2.4} /></NavIcon>
          <NavIcon $w={118} />
          <UrlBar>
            <Info size={15} color="#666" />
            <NavIcon $w={24} $color="#12bc00"><Lock size={15} fill="#12bc00" /></NavIcon>
            <UrlText>https://code.<UrlHost>ondruch.com</UrlHost>/pah/rails-blog/wikis/Tutorial-začátek</UrlText>
            <NavIcon $w={28}><FileText size={16} color="#666" /></NavIcon>
            <VSep $h={26} $ml={6} $mr={7} />
            <NavIcon $w={26}><Ellipsis size={18} color="#666" strokeWidth={3} /></NavIcon>
            <NavIcon $w={30}><Pocket /></NavIcon>
            <NavIcon $w={26}><Star size={17} color="#666" strokeWidth={2.2} /></NavIcon>
          </UrlBar>
          <NavIcon $w={143} $end><House size={18} strokeWidth={2.2} /></NavIcon>
          <NavIcon $w={42}><Library size={18} /></NavIcon>
          <NavIcon $w={24}><PanelLeft size={17} strokeWidth={2.2} /></NavIcon>
          <NavIcon $w={8} />
          <VSep $h={30} />
          <NavIcon $w={38}><Menu size={18} strokeWidth={2.2} /></NavIcon>
        </NavBar>
        <Page>
          <PageMain>
            <GlHeader>
              <GitLabLogo size={25} />
              <GlBrand>GitLab</GlBrand>
              <GlLink $mr={17}>Projects <ChevronDown size={12} /></GlLink>
              <GlLink>Groups</GlLink>
              <GlLink $mr={21}>Activity</GlLink>
              <GlLink $mr={18}>Milestones</GlLink>
              <GlLink $mr={0}>Snippets</GlLink>
              <GlRight>
                <HeaderIcon $w={22}><SquarePlus size={16} fill="#d1d1f0" color="#292961" /></HeaderIcon>
                <ChevronDown size={13} />
                <SearchBox>
                  <SearchScope>This project</SearchScope>
                  <SearchHint>Search</SearchHint>
                  <Search size={14} style={{ marginRight: 10 }} />
                </SearchBox>
                <HeaderIcon $w={54}>
                  <IssueIcon />
                  <HeaderBadge $bg="#1aaa55">1</HeaderBadge>
                </HeaderIcon>
                <HeaderIcon><MergeIcon /></HeaderIcon>
                <HeaderIcon $w={46}>
                  <TodoIcon />
                  <HeaderBadge $bg="#1f78d1">1</HeaderBadge>
                </HeaderIcon>
                <Avatar><IdentIcon /></Avatar>
                <ChevronDown size={13} />
              </GlRight>
            </GlHeader>
            <GlBody>
              <Sidebar>
                <ProjectHead><ProjectAvatar>R</ProjectAvatar>rails-blog</ProjectHead>
                {SIDE_ITEMS.map((s) => (
                  <SideItem key={s.label} $active={s.active}>
                    {s.icon}
                    <span>{s.label}</span>
                    {s.count !== undefined && <Count>{s.count}</Count>}
                  </SideItem>
                ))}
                <Collapse><ChevronsLeft size={18} strokeWidth={2.4} />Collapse sidebar</Collapse>
              </Sidebar>
              <WikiMain>
                <WikiTable $cols="222px 57px 155px" $w={435} $mt={-25}>
                  <Cell $lh={56}>odstranit prázdnou složku</Cell>
                  <Cell $lh={56}>rmdir</Cell>
                  <Cell $lh={56}>$ rmdir environment/</Cell>
                </WikiTable>
                <WikiTable $cols="105px 652px" $w={758} $mt={587}>
                  {LOWER_ROWS.map(([a, b], i) => (
                    <React.Fragment key={i}>
                      <Cell $first={i === 0}>{a}</Cell>
                      <Cell $first={i === 0}>{b}</Cell>
                    </React.Fragment>
                  ))}
                </WikiTable>
              </WikiMain>
              <RightBar>
                <CloneRow><CloudDownload size={15} strokeWidth={2.4} />Clone repository</CloneRow>
                <RightInner>
                  <WikiTitle>Tutorial začátek</WikiTitle>
                  <WikiHome>Home</WikiHome>
                  <MorePages>More Pages</MorePages>
                </RightInner>
              </RightBar>
            </GlBody>
          </PageMain>
          <PageScroll><PageThumb /></PageScroll>
        </Page>
      </FirefoxWindow>

      <FilesShadow />
      <FilesWindow>
        <FilesTitle>
          <DimButtons $mr={11}>
            <DimButton $bg="#e9622f" $fg="#7a2a10"><X size={9} strokeWidth={3} /></DimButton>
            <DimButton $bg="#777569"><Minus size={9} strokeWidth={3} /></DimButton>
            <DimButton $bg="#777569"><Square size={8} strokeWidth={3} /></DimButton>
          </DimButtons>
          hello_app
        </FilesTitle>
        <FilesTools>
          <ToolGroup $mr={9}>
            <ToolButton $first $w={32} $on><ChevronLeft size={18} color="#e0dcd3" /></ToolButton>
            <ToolButton $w={32}><ChevronRight size={18} color="#8f8c83" /></ToolButton>
          </ToolGroup>
          <ToolGroup>
            <ToolButton $first $pad={8}><House size={15} color="#dfdbd2" strokeWidth={2.4} />Home</ToolButton>
            <ToolButton $pad={9}>rails</ToolButton>
            <ToolButton $pad={9} $on $bold>hello_app</ToolButton>
          </ToolGroup>
          <ToolSpacer />
          <ToolGroup $mr={9}>
            <ToolButton $first $w={32}><Search size={15} strokeWidth={2.6} /></ToolButton>
          </ToolGroup>
          <ToolGroup>
            <ToolButton $first $w={32}><List size={14} strokeWidth={2.6} /></ToolButton>
            <ToolButton $w={32} $on><Grip size={14} strokeWidth={2.6} /></ToolButton>
          </ToolGroup>
        </FilesTools>
        <FilesBody>
          <Places>
            {PLACES.map((p) => <Place key={p.label}>{p.icon}{p.label}</Place>)}
            <PlaceSep />
            {PLACES_2.map((p) => <Place key={p.label}>{p.icon}{p.label}</Place>)}
          </Places>
          <IconGrid>
            {FILES.map((f) => (
              <FileItem key={f.name}>
                <FileIconBox>{f.dir ? <FolderIcon /> : <DocIcon code={f.code} />}</FileIconBox>
                <FileLabel>{f.name}</FileLabel>
              </FileItem>
            ))}
          </IconGrid>
        </FilesBody>
      </FilesWindow>
    </Desktop>
  );
}
